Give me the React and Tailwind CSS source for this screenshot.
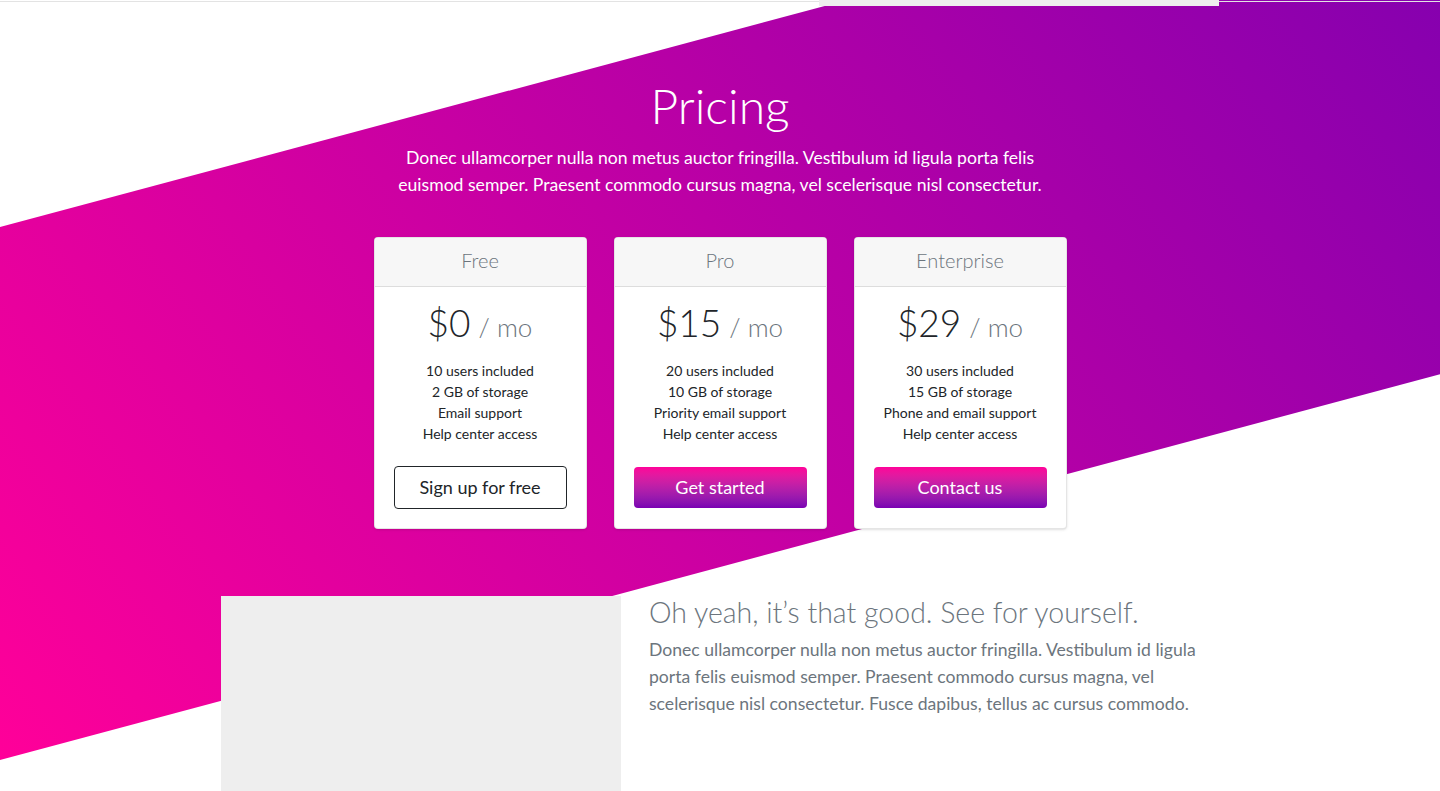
import React from 'react';

const plans = [
  {
    name: 'Free',
    price: '$0',
    features: ['10 users included', '2 GB of storage', 'Email support', 'Help center access'],
    cta: 'Sign up for free',
    outline: true,
  },
  {
    name: 'Pro',
    price: '$15',
    features: ['20 users included', '10 GB of storage', 'Priority email support', 'Help center access'],
    cta: 'Get started',
  },
  {
    name: 'Enterprise',
    price: '$29',
    features: ['30 users included', '15 GB of storage', 'Phone and email support', 'Help center access'],
    cta: 'Contact us',
  },
];

function PlanCard({ plan }) {
  return (
    <div className="w-[213px] bg-white border border-black/10 rounded-[4px] shadow-sm overflow-hidden">
      <div className="h-[49px] flex items-center justify-center bg-[#f7f7f7] border-b border-black/10">
        <h4 className="text-[20px] font-light text-[#6c757d] -mt-[4px]">{plan.name}</h4>
      </div>
      <div className="px-[19px] pt-[12px] pb-[19px] text-center">
        <h1 className="text-[37px] leading-[48px] font-light text-[#212529]">
          {plan.price} <small className="-ml-[2px] text-[26px] font-light text-[#6c757d]">/ mo</small>
        </h1>
        <ul className="mt-[9px] text-[14px] leading-[21px] text-[#212529]">
          {plan.features.map((f) => (
            <li key={f}>{f}</li>
          ))}
        </ul>
        {plan.outline ? (
          <button className="mt-[22px] w-full h-[43px] rounded-[4px] border border-[#212529] text-[18px] text-[#212529] bg-white">
            {plan.cta}
          </button>
        ) : (
          <button className="mt-[23px] w-full h-[41px] rounded-[4px] text-[18px] text-white bg-gradient-to-b from-[#ff0099] to-[#7a00b3]">
            {plan.cta}
          </button>
        )}
      </div>
    </div>
  );
}

export default function App() {
  return (
    <div className="relative h-[791px] overflow-hidden bg-white" style={{ fontFamily: 'Lato, "Open Sans", sans-serif' }}>
      {/* skewed gradient band */}
      <div className="absolute left-0 top-[227px] w-[1440px] h-[533px] origin-top-left -skew-y-[15deg] bg-[linear-gradient(57deg,#ff0099,#7f00b0)]"></div>

      {/* tail of the previous section */}
      <div className="relative z-10 h-[7px]">
        <div className="mt-px h-px bg-[#e3e3e3]"></div>
        <div className="w-[998px] mx-auto flex justify-end -mt-[2px]">
          <div className="w-[400px] h-[6px] bg-[#eeeeee]"></div>
        </div>
      </div>

      <section className="relative z-10 pt-[70px] text-center">
        <h1 className="text-[48px] leading-[56px] font-light text-white">Pricing</h1>
        <p className="mt-[10px] mx-auto max-w-[664px] text-[17.6px] leading-[27px] text-white">
          Donec ullamcorper nulla non metus auctor fringilla. Vestibulum id ligula porta felis euismod semper. Praesent commodo cursus magna, vel scelerisque nisl consectetur.
        </p>
        <div className="mt-[39px] flex justify-center gap-[27px] text-left">
          {plans.map((p) => (
            <PlanCard key={p.name} plan={p} />
          ))}
        </div>
      </section>

      <section className="relative z-10 mt-[67px] w-[998px] mx-auto flex gap-[28px]">
        <div className="w-[400px] h-[400px] shrink-0 bg-[#eeeeee] flex items-center justify-center pl-[18px] text-[#aaaaaa] text-[15px]">
          500x500
        </div>
        <div>
          <h2 className="text-[28.5px] leading-[32px] font-light text-[#6c757d]">Oh yeah, it’s that good. See for yourself.</h2>
          <p className="mt-[8px] text-[17.6px] leading-[27px] text-[#6c757d]">
            Donec ullamcorper nulla non metus auctor fringilla. Vestibulum id ligula porta felis euismod semper. Praesent commodo cursus magna, vel scelerisque nisl consectetur. Fusce dapibus, tellus ac cursus commodo.
          </p>
        </div>
      </section>
    </div>
  );
}
